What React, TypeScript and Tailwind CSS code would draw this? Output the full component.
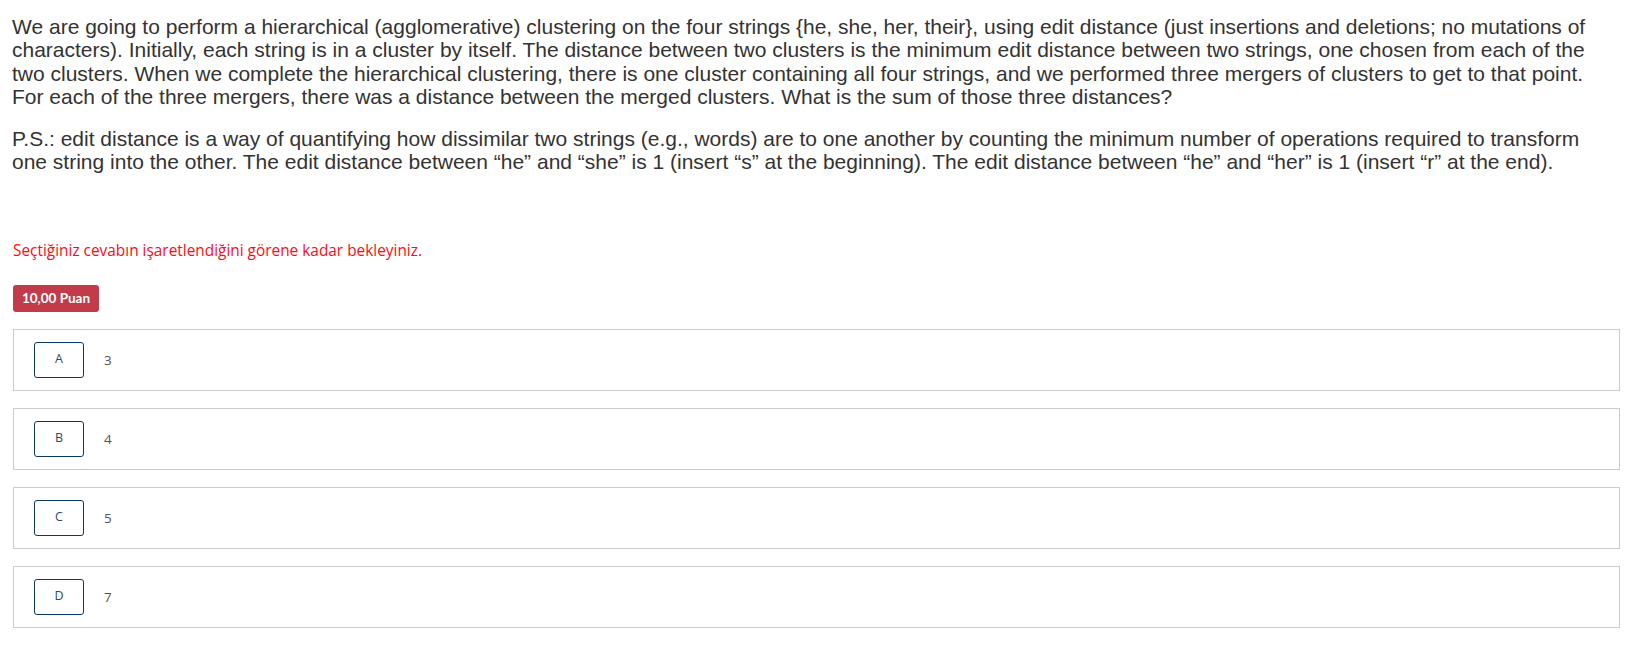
import React from "react";

const options = [
  { letter: "A", value: "3" },
  { letter: "B", value: "4" },
  { letter: "C", value: "5" },
  { letter: "D", value: "7" },
];

export default function App() {
  return (
    <div className="bg-white w-[1641px] min-h-[646px] pl-[12px] pt-[15px]">
      <div className="w-[1602px] font-['Liberation_Sans',Arial,sans-serif] text-[21px] leading-[23.3px] text-[#333333]">
        <p className="mb-[19px]">
          We are going to perform a hierarchical (agglomerative) clustering on the four strings {"{"}he, she, her, their{"}"}, using edit distance (just insertions and deletions; no mutations of characters). Initially, each string is in a cluster by itself. The distance between two clusters is the minimum edit distance between two strings, one chosen from each of the two clusters. When we complete the hierarchical clustering, there is one cluster containing all four strings, and we performed three mergers of clusters to get to that point. For each of the three mergers, there was a distance between the merged clusters. What is the sum of those three distances?
        </p>
        <p>
          P.S.: edit distance is a way of quantifying how dissimilar two strings (e.g., words) are to one another by counting the minimum number of operations required to transform one string into the other. The edit distance between “he” and “she” is 1 (insert “s” at the beginning). The edit distance between “he” and “her” is 1 (insert “r” at the end).
        </p>
      </div>
      <div className="mt-[66px] pl-px font-['Open_Sans',sans-serif] text-[15.4px] leading-[21px] text-[#ff0a14]">
        Seçtiğiniz cevabın işaretlendiğini görene kadar bekleyiniz.
      </div>
      <div className="mt-[24px] ml-px inline-flex h-[27px] w-[86px] items-center justify-center rounded-[3px] bg-[#c23b4b] font-['Lato',sans-serif] text-[13.5px] font-bold text-white">
        10,00 Puan
      </div>
      <div className="mt-[17px] ml-px flex w-[1607px] flex-col gap-[17px]">
        {options.map((o) => (
          <div
            key={o.letter}
            className="flex h-[62px] items-center border border-[#cccccc] pl-[20px]"
          >
            <div className="flex h-[36px] w-[50px] items-center justify-center rounded-[3px] border border-[#0b3a5e] font-['Open_Sans',sans-serif] text-[12.5px] text-[#2c4a68]">
              {o.letter}
            </div>
            <div className="ml-[20px] font-['Open_Sans',sans-serif] text-[13.5px] text-[#555555]">
              {o.value}
            </div>
          </div>
        ))}
      </div>
    </div>
  );
}
